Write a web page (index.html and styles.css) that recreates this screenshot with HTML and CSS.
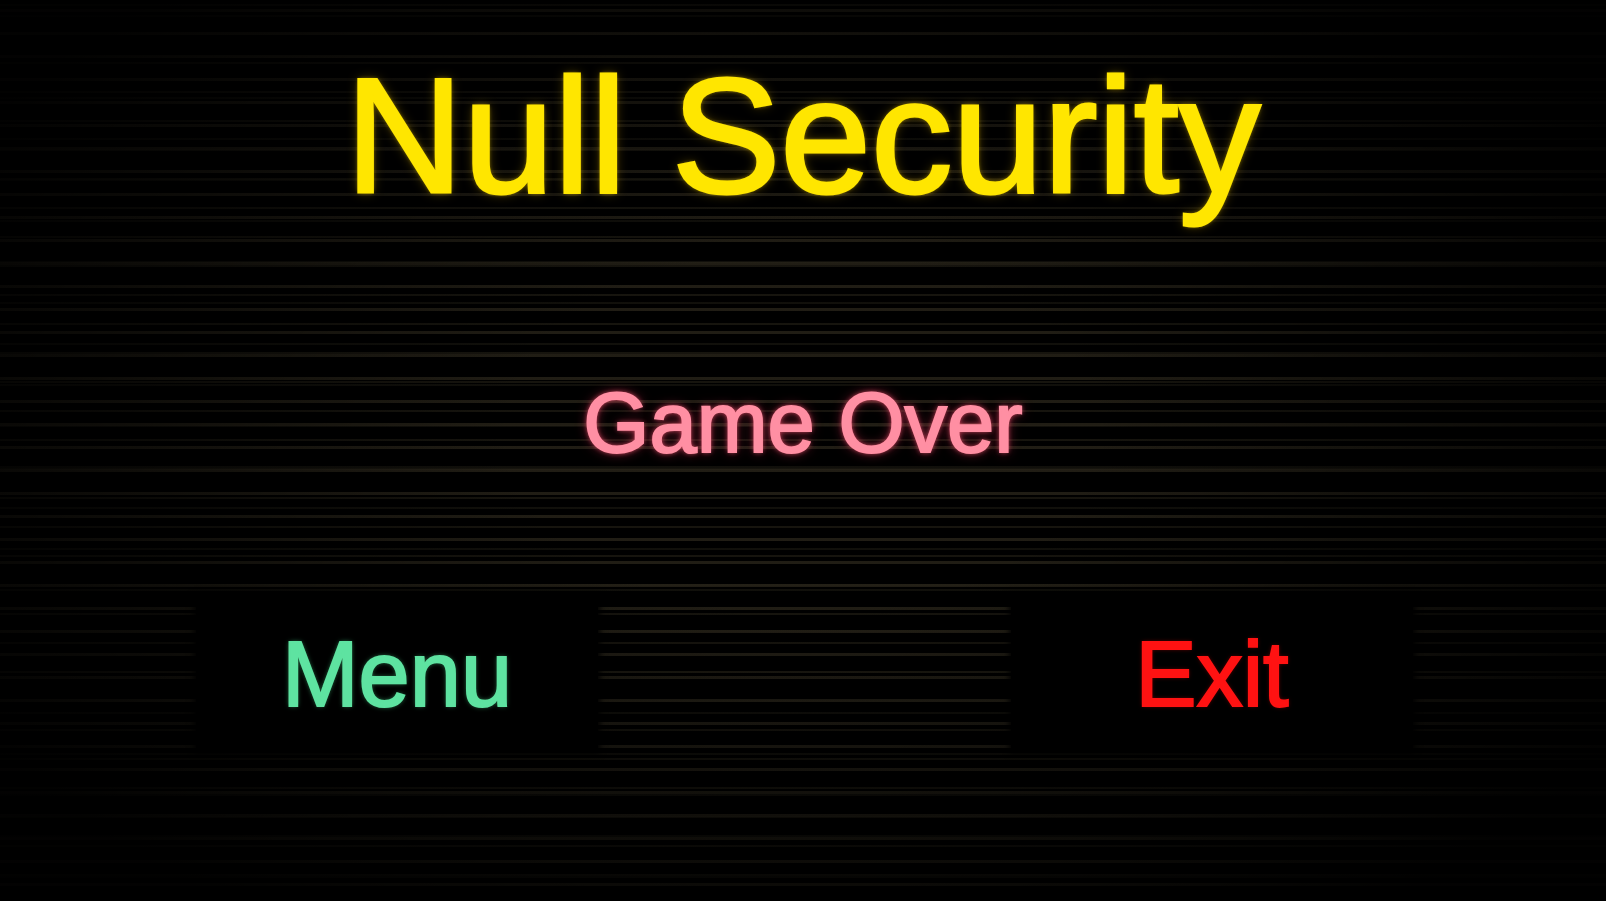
FILE: index.html
```html
<!DOCTYPE html>
<html lang="en">
<head>
    <meta charset="UTF-8">
    <meta name="viewport" content="width=device-width, initial-scale=1.0">
    <title>Null Security - Game Over</title>
    <link rel="stylesheet" href="styles.css">
</head>
<body>
    <div class="screen">
        <h1 class="title">Null Security</h1>
        <h2 class="status">Game Over</h2>
        <div class="actions">
            <button type="button" class="btn btn-menu">Menu</button>
            <button type="button" class="btn btn-exit">Exit</button>
        </div>
    </div>
</body>
</html>
```

FILE: styles.css
```css
html, body {
    margin: 0;
    height: 100%;
}
body {
    font-family: "Liberation Sans", Arial, sans-serif;
    background-color: #000;
    /* crt look: dark edges on top of uneven scanlines */
    background-image:
        radial-gradient(ellipse 60% 65% at 50% 48%, rgba(0,0,0,0) 30%, rgba(0,0,0,0.6) 75%, rgba(0,0,0,0.92) 100%),
        repeating-linear-gradient(to bottom, transparent 0 9px, rgba(38,34,24,0.85) 9px 12px, transparent 12px 23px),
        repeating-linear-gradient(to bottom, transparent 0 4px, rgba(32,29,20,0.7) 4px 6px, transparent 6px 29px),
        repeating-linear-gradient(to bottom, transparent 0 15px, rgba(28,26,18,0.6) 15px 17px, transparent 17px 41px);
    overflow: hidden;
}
.screen {
    display: flex;
    flex-direction: column;
    align-items: center;
    padding-top: 54px;
}
.title {
    margin: 0;
    font-size: 163px;
    font-weight: normal;
    line-height: 1;
    color: #ffe600;
    -webkit-text-stroke: 3px #ffe600;
    text-shadow: 0 0 4px rgba(255,220,0,0.7), 0 0 12px rgba(255,200,0,0.35);
}
.status {
    margin: 163px 0 0;
    font-size: 85px;
    font-weight: normal;
    line-height: 1;
    color: #ff8fa3;
    -webkit-text-stroke: 2px #ff8fa3;
    text-shadow: 0 0 5px rgba(255,90,120,0.9), 0 0 12px rgba(255,60,100,0.5);
}
.actions {
    align-self: stretch;
    display: flex;
    justify-content: space-between;
    padding: 0 193px 0 196px;
    margin-top: 131px;
}
.btn {
    width: 402px;
    height: 155px;
    display: flex;
    align-items: center;
    justify-content: center;
    font-family: inherit;
    font-size: 92px;
    line-height: 1;
    background-color: #000;
    border: none;
    box-shadow: 0 0 6px 2px #000;
    cursor: pointer;
    padding: 0;
}
.btn-menu {
    color: #5ee3a1;
    -webkit-text-stroke: 2px #5ee3a1;
    text-shadow: 0 0 5px rgba(80,230,150,0.6);
}
.btn-exit {
    color: #ff1212;
    -webkit-text-stroke: 2px #ff1212;
    text-shadow: 0 0 4px rgba(255,0,0,0.5);
}
```
